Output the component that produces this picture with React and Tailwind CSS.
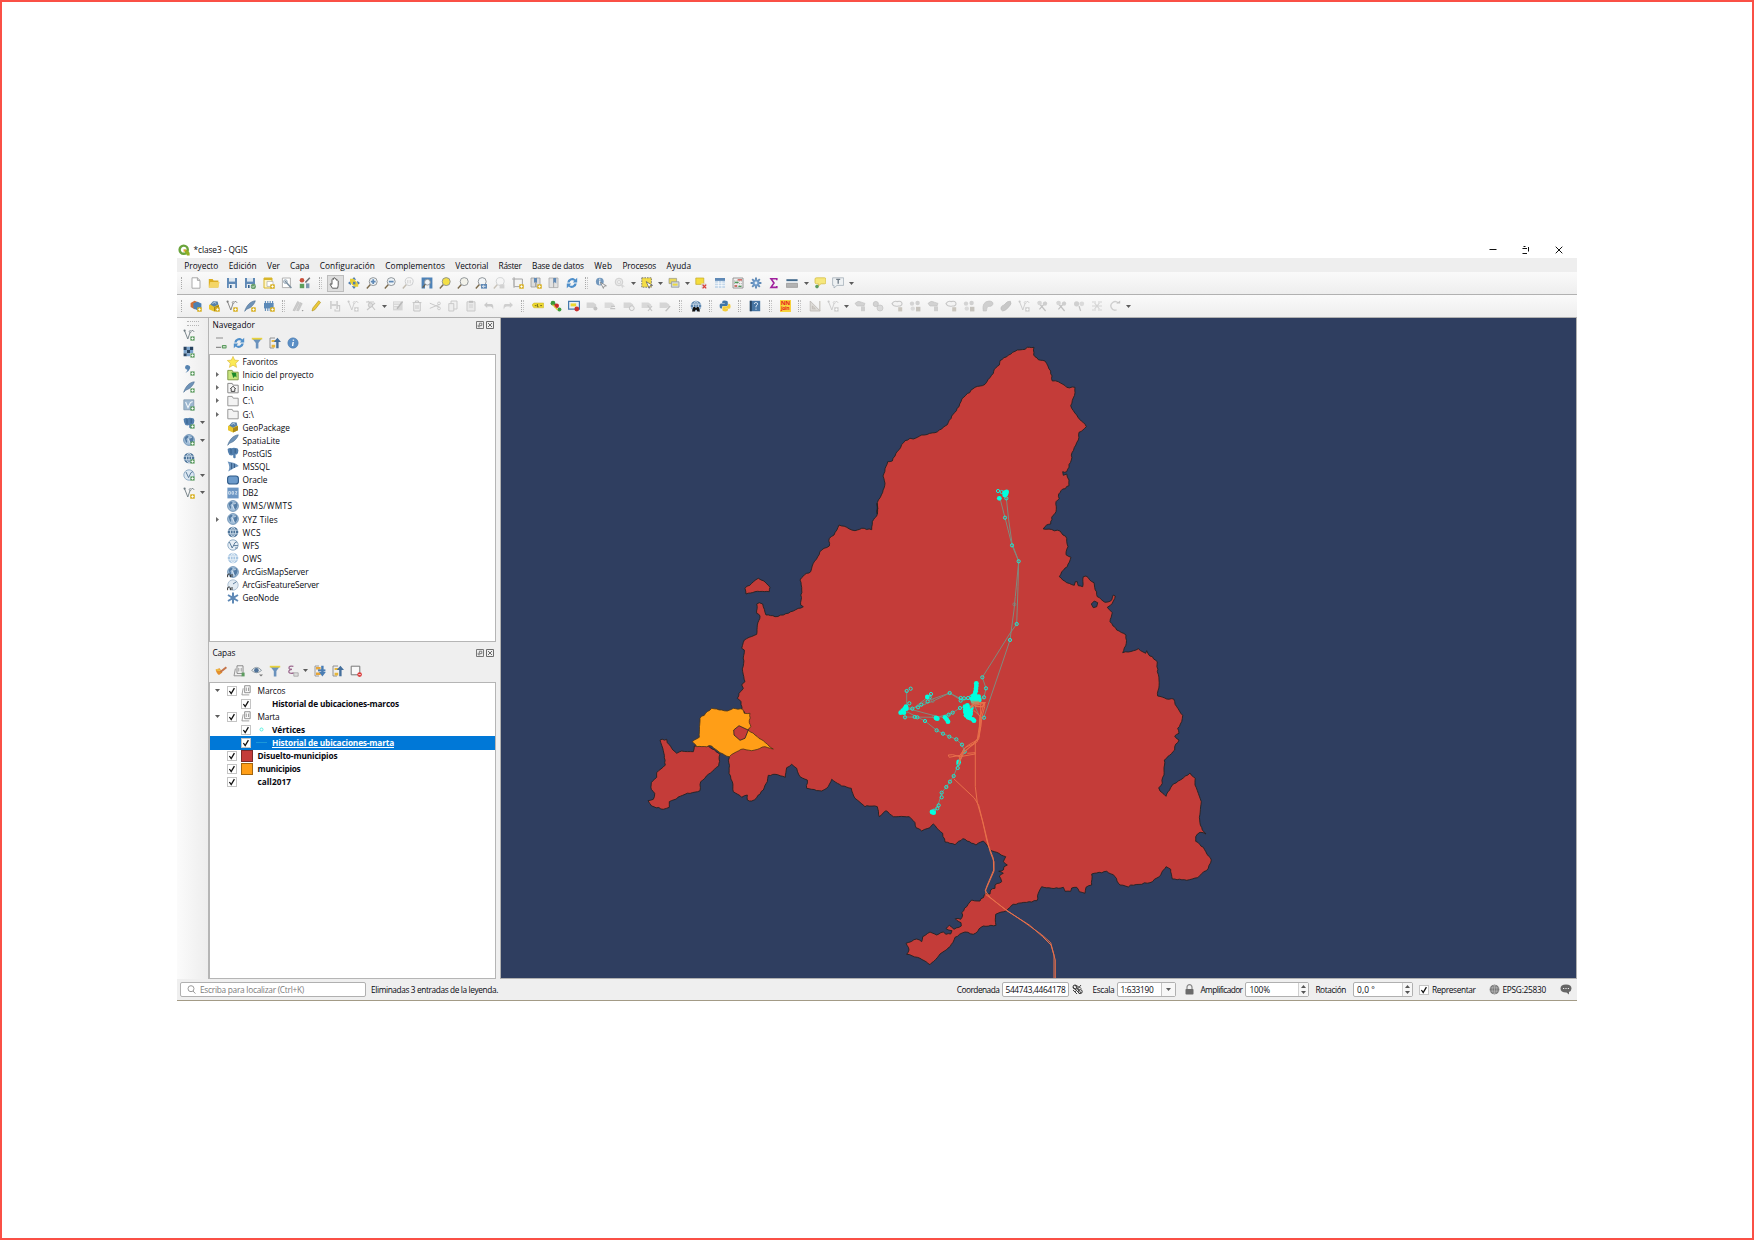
import React, { useLayoutEffect, useRef } from "react";

/* Text run whose tracking is tuned so that it spans a given width. */
function Label({ w, className = "", underline = false, children }) {
  const ref = useRef(null);
  useLayoutEffect(() => {
    const el = ref.current;
    el.style.letterSpacing = "0px";
    const natural = el.getBoundingClientRect().width;
    el.style.letterSpacing = (w - natural) / String(children).length + "px";
  }, [w, children]);
  return (
    <span className={"block shrink-0 whitespace-pre " + className} style={{ width: w }}>
      <span ref={ref} className={underline ? "inline-block underline" : "inline-block"}>{children}</span>
    </span>
  );
}

const B = "#5f89b6";
const D = "#355f8a";
const G = "#c9c9c9";

const plusY = <><rect x="7.2" y="7.2" width="4.6" height="4.6" rx=".6" fill="#d9b32a" /><path d="M8.3 9.5h2.4M9.5 8.3v2.4" stroke="#fff" strokeWidth=".9" /></>;
const plusG = <><rect x="7.4" y="7.4" width="4.2" height="4.2" fill="#5c9c5f" /><path d="M8.3 9.5h2.4M9.5 8.3v2.4" stroke="#fff" strokeWidth=".9" /></>;
const lens = (fill, stroke = "#8a8f93") => <><path d="M4.4 7.6L.8 11.4" stroke="#7b6a4b" strokeWidth="1.4" /><circle cx="7.2" cy="4.6" r="4" fill={fill} stroke={stroke} strokeWidth=".9" /></>;
const floppy = <><path d="M1 1h10v10H1z" fill={B} /><path d="M3 1h6v3.6H3z" fill="#dfe8f0" /><path d="M2.8 7h6.4v4H2.8z" fill="#e9eef3" /><path d="M4 8h1.6v3H4z" fill={D} /></>;
const globe = (fill, line = "#dce8f3") => <><circle cx="6" cy="6" r="5.3" fill={fill} /><path d="M.9 4.2h10.2M.9 7.8h10.2M6 .7v10.6M6 .7C2.6 3.6 2.6 8.4 6 11.3C9.4 8.4 9.4 3.6 6 .7" fill="none" stroke={line} strokeWidth=".8" /></>;
const world = <><circle cx="6" cy="6" r="5.4" fill="#a3bfd9" stroke="#5f86ac" strokeWidth=".8" /><path d="M1.6 3.8L4 1.6l1.6.6-.8 1.8-1.4 1 .8 2.2-1 2zM6.4 5l1.2-2.4L9.4 2l1.2 3-1 3L8 10.200 7 7.600z" fill="#547ca5" /><path d="M5 4.600l2.400 5M7 4l2-1" stroke="#e6eef6" strokeWidth=".8" /></>;
const vee = (c) => <><path d="M1.5 1.6L4.8 10 7 3.6" fill="none" stroke={c} strokeWidth=".9" /><circle cx="1.6" cy="1.6" r="1.1" fill={c} /><circle cx="7.2" cy="2.6" r="1" fill="none" stroke={c} strokeWidth=".7" /><path d="M8.4 1.8Q10.2.4 11.2 3" fill="none" stroke={c} strokeWidth=".8" /></>;
const feather = <path d="M.7 11.3C2.4 6 5.8 1.4 11.3.8 10.8 3.4 7.4 8 2.6 9.2z" fill="#6f93b8" stroke="#4c6f92" strokeWidth=".6" />;
const folder = (f, s) => <path d="M.8 1.4h4.4l1 1.8h5v7.6H.8z" fill={f} stroke={s} strokeWidth=".9" />;
const elephant = <><path d="M.6 2Q2.400.4 4.600 1.200 6.600.2 8.600 1 11 .8 11.400 3.200 11.400 6 9.800 7.600L8.600 7.200v3.600Q7.200 12 6.200 10.600V8L4.400 8.600 2.400 8Q.6 5.400.6 2z" fill="#527fae" /><path d="M4 1.800v5M8.200 2v4.200" stroke="#2f5580" strokeWidth=".8" /></>;
const pack = <><path d="M1 5l5-2.4L11 5v4.2L6 11.6 1 9.2z" fill="#e8c52e" /><path d="M6 7.2L11 5v4.2L6 11.6z" fill="#a88718" /><path d="M2.2 4.4L5 1.2l4.6.4L10.4 4.6 6 6.8z" fill="#5580aa" /><path d="M4.4 3.4l2.4-1 1.4 1.2" stroke="#dce8f2" strokeWidth=".8" fill="none" /></>;
const sync = <><path d="M1.2 5.4A4.900 4.900 0 0 1 9.400 2.400L11.200.8v4.600H6.800l1.500-1.600A3 3 0 0 0 3.600 5.400z" fill="#4f8fca" /><path d="M10.800 6.600A4.900 4.900 0 0 1 2.600 9.600L.8 11.200V6.600h4.400L3.700 8.200a3 3 0 0 0 4.700-1.600z" fill="#4f8fca" /></>;
const funnel = <><path d="M.8 1h10.4L7.4 6v5.4H4.8V6z" fill="#6a92bd" /><path d="M.8.8h10.4v1.8H.8z" fill="#e8d23c" /></>;
const stack = <><path d="M4 .8h6v7.600H4z" fill="#fafafa" stroke="#7d7d7d" strokeWidth=".9" /><path d="M5.800 6.600V2.800M8.200 6.600V2.800" stroke="#7d7d7d" strokeWidth=".8" /><path d="M2.400 3.600L1 10.800h8" fill="none" stroke="#8c8c8c" strokeWidth=".9" /></>;
const tag = (c) => <path d="M.6 2.6h6.8l2.8 1.8v2L7.400 8H.6z" fill={c} />;

const ICONS = {
  page: <path d="M2 .8h5.4L10 3.4v7.8H2zM7.4.8v2.6H10" fill="#fff" stroke="#a2a2a2" strokeWidth=".9" />,
  open: <><path d="M.8 2h3.8l1 1.4h4.8v7H.8z" fill="#dcae22" /><path d="M2.2 5h9.4l-1.4 5.6H.8z" fill="#f4d565" /></>,
  save: floppy,
  saveAs: <>{floppy}<circle cx="9.4" cy="9.4" r="2.6" fill="#6aa06c" /><path d="M8 9.4l1 1 1.8-1.8" stroke="#fff" fill="none" strokeWidth=".7" /></>,
  layout: <><path d="M1 1h8v10H1z" fill="#fff7c9" stroke="#d6b52c" /><path d="M1 1h8v2H1z" fill="#d8b62a" /><path d="M4 4.4h6v5H4z" fill="#fff" stroke="#aaa" strokeWidth=".7" />{plusY}</>,
  layoutMgr: <><path d="M1.4 1h8v9.6h-8z" fill="#fff" stroke="#aaa" strokeWidth=".9" /><path d="M4 4l6.4 7" stroke="#7c8f9f" strokeWidth="1.5" /><circle cx="4.4" cy="4.6" r="1.8" fill="none" stroke="#8399ab" strokeWidth=".9" /></>,
  style: <><circle cx="3" cy="3.2" r="2.3" fill="#c8503c" /><path d="M6.400 5.600l4.400-4.800" stroke="#6b6f72" strokeWidth="1.500" /><path d="M.8 6.800h4.400v4.400H.8z" fill="#5d9e5b" /><path d="M7 6.4h3.400v4.800H7z" fill="#7d98b0" /></>,
  hand: <path d="M3.4 11.2L1 7.2q.8-1 2 .2V2.4q.8-1 1.5 0V1.2q.9-.9 1.6 0v.9q.9-.7 1.5.2v1q1-.5 1.6.5v4.6L8.6 11.2z" fill="#fff" stroke="#3c3c3c" strokeWidth=".8" />,
  pan: <><path d="M6 0l2.200 2.800H3.800zM6 12L3.800 9.200h4.400zM0 6l2.800-2.200v4.400zM12 6L9.200 8.200V3.800z" fill="#4f7db0" /><path d="M2 1.800h3.400l3 2.800 1.800 2.600v2.600H7L3.800 7.400 2 4.800z" fill="#e7cf35" /><path d="M5 4.800h2.400v2.600H5z" fill="#4f7db0" /></>,
  zoomIn: <>{lens("#eef3f6")}<path d="M4.800 4.6h4.800M7.2 2.200v4.800" stroke={B} strokeWidth="1.7" /></>,
  zoomOut: <>{lens("#eef3f6")}<path d="M4.800 4.6h4.800" stroke={B} strokeWidth="1.7" /></>,
  zoomNative: <g opacity=".4">{lens("#f4f4f4")}<path d="M5.8 3v3.4M8.2 3v3.4" stroke="#888" strokeWidth=".8" /></g>,
  zoomFull: <><path d="M.6.6h10.800v10.800H8.400V8H4v3.400H.6z" fill="#4e82b7" /><circle cx="6.4" cy="5.2" r="2.900" fill="#f0f4f8" stroke="#8a9298" strokeWidth=".9" /><path d="M4.4 7.4L1.6 10.6" stroke="#6c6048" strokeWidth="1.2" /></>,
  zoomSel: lens("#f3df45"),
  zoomLayer: lens("#f2f2ea"),
  zoomLast: <>{lens("#f2f5f7")}<path d="M6 7h6v4.6H6z" fill={B} /><path d="M10.6 9.3H7.6M8.8 8L7.4 9.3l1.4 1.3" stroke="#fff" strokeWidth=".8" fill="none" /></>,
  zoomNext: <g opacity=".35">{lens("#f7f7f7")}<path d="M6.6 7.4h4.8v4H6.6z" fill="#999" /></g>,
  newMap: <><path d="M2 2h8.4v7.6H2z" fill="#f3f3f3" stroke="#a6a6a6" strokeWidth="1" /><path d="M2 0v11M0 2h3" stroke="#b1b1b1" />{plusY}</>,
  bookmarkAdd: <><path d="M1 1h4.6v9H1zM6 1h4v9H6z" fill="#dcdcdc" stroke="#999" strokeWidth=".8" /><path d="M4 1h3v5L5.5 4.8 4 6z" fill={B} />{plusY}</>,
  bookmark: <><path d="M1 1h4.6v9.6H1zM5.6 1H10v9.6H5.6z" fill="#e2e2e2" stroke="#aaa" strokeWidth=".8" /><path d="M5.4 1h2.8v5.4L6.8 5 5.4 6.4z" fill={B} /></>,
  sync,
  identify: <><circle cx="4.8" cy="4.6" r="3.9" fill="#7398bd" /><path d="M4.8 3.6v4M4.8 1.8v1" stroke="#fff" strokeWidth="1.2" /><path d="M5.4 5.4l6 3.4-2.4.4-.6 2.2z" fill="#f6f6f6" stroke="#777" strokeWidth=".7" /></>,
  action: <g opacity=".5"><circle cx="5" cy="5" r="3.8" fill="#ddd" stroke="#aaa" /><circle cx="5" cy="5" r="1.5" fill="#fff" stroke="#aaa" strokeWidth=".8" /><path d="M6 6l5 3.6-2 .2-.6 1.8z" fill="#bbb" /></g>,
  select: <><path d="M.8.8h9.6v9.4H.8z" fill="#f4dd45" stroke="#707070" strokeWidth=".9" strokeDasharray="1.6 1" /><path d="M5.2 4.6l6.4 3.8-2.6.3-.8 2.6z" fill="#fff" stroke="#555" strokeWidth=".7" /></>,
  selectForm: <><path d="M1 1.4h7.6v5.2H1z" fill="#e9d85a" stroke="#9a9a8a" strokeWidth=".7" /><path d="M3.4 4.8h7.6v5.4H3.4z" fill="#d5dade" stroke="#8f979d" strokeWidth=".8" /><path d="M4.6 6.6h5v2h-5z" fill="#ecd93f" /></>,
  deselect: <><path d="M.8 1h8v6.400h-8z" fill="#f4dc3d" stroke="#c3a92a" strokeWidth=".7" /><path d="M6.400 6.400h4.800v4.800H6.400z" fill="#ddd" /><path d="M7.6 7.6l3.6 3.8M11.2 7.6L7.6 11.4" stroke="#dc3b34" strokeWidth="1.3" /></>,
  table: <><path d="M1 1h10v10H1z" fill="#c5d8ea" /><path d="M1 1h10v2.8H1z" fill={B} /><path d="M1 6.2h10M1 8.6h10M4.4 4v7M7.8 4v7" stroke="#fff" strokeWidth=".7" /></>,
  calc: <><path d="M1 1h10v10H1z" fill="#f2f2f2" stroke="#8d8d8d" strokeWidth=".9" /><path d="M2 4h8M2 6.6h8M2 9h8" stroke="#777" strokeWidth=".6" strokeDasharray="1.4 1" /><path d="M2.600 5.400h4M6.400 9.400h3" stroke="#4b9955" strokeWidth="1.3" /><path d="M5.600 2.800h4.400M2.600 9h2.400" stroke="#c94b42" strokeWidth="1.3" /></>,
  gear: <><path d="M6 .6v10.8M.6 6h10.8M2.2 2.2l7.6 7.6M9.8 2.2L2.2 9.8" stroke={B} strokeWidth="1.9" /><circle cx="6" cy="6" r="3.5" fill="#6d99c7" /><circle cx="6" cy="6" r="1.4" fill="#e2ecf5" /></>,
  sigma: <path d="M8.800 3.200V1.8H3L6 6 3 10.400h5.800V9" fill="none" stroke="#a0219d" strokeWidth="1.6" />,
  ruler: <><path d="M.4 2.2h11.2v1.8H.4z" fill="#436a8c" /><path d="M.4 4h11.2v1.4H.4z" fill="#d9e2ea" /><path d="M.4 6.4h11.2v4H.4z" fill="#b3b3b3" stroke="#888" strokeWidth=".6" /></>,
  tip: <><path d="M2.6.8h8q1.2 0 1.2 1.2v3.6q0 1.2-1.2 1.2H7L4.4 9V6.8H2.6Q1 6.8 1 5.4V2Q1 .8 2.6.8z" fill="#f6e77c" stroke="#d1b93a" strokeWidth=".7" /><circle cx="3" cy="9.6" r="1.8" fill="#5e9c5e" /></>,
  annot: <><path d="M.6.8h11v7.6H5L2 11V8.4H.6z" fill="#eef1f3" stroke="#a3afb8" strokeWidth=".8" /><path d="M4.2 2.4h4M6.2 2.4v4.4" stroke="#6d7a84" strokeWidth="1.3" /></>,
  dsm: <><path d="M.6 3l4-2.2 4 1.6v5L4.6 9.2.6 7z" fill="#cf7038" /><path d="M3.4 3.2l4-1.4 4 1.8v4.6l-4 2-4-2z" fill="#4b7fb4" />{plusY}</>,
  newGpkg: <>{pack}{plusY}</>,
  newShp: <>{vee("#7a7a7a")}{plusY}</>,
  newSpl: <>{feather}{plusY}</>,
  newTmp: <><path d="M1 3h9.6v5.4H1z" fill="#5c8ab8" /><path d="M2.4 1v10M4.8 1v10M7.2 1v10M9.6 1v3" stroke="#5c8ab8" strokeWidth="1.1" />{plusY}</>,
  pencils: <><path d="M1 10.400L5.600 1.400l1.800 1L3 10.800zM4.600 10.400L8.200 2.600l2 1L6.600 10.800z" fill="#cbcbcb" stroke="#bbb" strokeWidth=".6" /><path d="M9.600 10h2l-1 1.400z" fill="#999" /></>,
  pencil: <path d="M2 11l.8-3L8.6.8l2 1.6L4.8 9.8z" fill="#ecc938" stroke="#ad8e1c" strokeWidth=".6" />,
  gSave: <><path d="M1 1h8v8H1z" fill="#d2d2d2" /><path d="M2.8 1h4.4v3H2.8zM2.8 6h4.4v3H2.8z" fill="#f2f2f2" /><path d="M8 5.6h2.6V11H6V9.2" fill="none" stroke={G} strokeWidth="1.1" /></>,
  gVee: <>{vee(G)}<path d="M7.2 7.2h4.4v4.4H7.2z" fill="#cfcfcf" /><path d="M8.2 9.4h2.4M9.4 8.2v2.4" stroke="#fff" strokeWidth=".8" /></>,
  gNode: <><path d="M1 2h8M3 1l7 9M10 3L2 10" stroke={G} strokeWidth="1.2" /><circle cx="5.4" cy="5" r="2.2" fill="#ddd" stroke="#bfbfbf" strokeWidth=".8" /></>,
  gForm: <><path d="M1 1.4h9.6v9H1z" fill="#d6d6d6" /><path d="M2 3h6M2 5.4h5M2 8h4" stroke="#f6f6f6" strokeWidth=".9" /><path d="M10.6 1.6L5 8.8" stroke="#b8b8b8" strokeWidth="1.4" /></>,
  gTrash: <path d="M1.6 2.6h8.8M4.4 2.4V1h3v1.4M2.8 3v8h6.4V3M5 4.8v4.4M7 4.8v4.4" fill="none" stroke="#c3c3c3" strokeWidth="1" />,
  gCut: <><path d="M.8 3.2l9.6 4M.8 8.4l9.6-4" stroke={G} strokeWidth="1" /><circle cx="10" cy="3.4" r="1.4" fill="none" stroke={G} strokeWidth=".9" /><circle cx="10" cy="8.4" r="1.4" fill="none" stroke={G} strokeWidth=".9" /></>,
  gCopy: <><path d="M4 1h6v8H4z" fill="#f1f1f1" stroke="#c6c6c6" strokeWidth=".9" /><path d="M1.8 3.6h5v7.4h-5z" fill="#ededed" stroke="#c6c6c6" strokeWidth=".9" /></>,
  gPaste: <><path d="M2 1.8h8V11H2z" fill="#e9e9e9" stroke={G} /><path d="M4 .8h4v2H4z" fill="#bdbdbd" /><path d="M4 5h4M4 7h4" stroke={G} strokeWidth=".8" /></>,
  gUndo: <path d="M1 5l3.2-3v2h5q1.8 1.6 1 5.4Q9.4 6.6 7.6 6.4H4.2V8z" fill="#cacaca" />,
  gRedo: <path d="M11 5L7.8 2v2h-5Q1 5.6 1.8 9.4 2.6 6.6 4.4 6.4h3.4V8z" fill="#cfcfcf" />,
  label: <><path d="M0 5l1.800-2H11.600v4.800H1.800z" fill="#ecd72f" stroke="#c8b327" strokeWidth=".5" /><path d="M2.8 5.6h1.6M5.4 4v2.8h1.2M8.2 5.6H10" stroke="#6c6320" strokeWidth=".9" fill="none" /></>,
  diagram: <><circle cx="3" cy="3.2" r="2.4" fill="#3d9a3b" /><circle cx="6.6" cy="5.8" r="2.4" fill="#c92a2a" /><circle cx="9.4" cy="9.6" r="2" fill="#3d9a3b" /><path d="M2.6 4.6L7.6 9.8" stroke="#dcc52b" strokeWidth="1.2" /></>,
  labelHi: <><path d="M.6 1.4h10.8v7.8H.6z" fill="#e9f0f8" stroke="#4679ad" strokeWidth="1.2" /><path d="M2.6 3.4h5.6v3H2.6z" fill="#ecd72f" /><circle cx="8.8" cy="9" r="2.4" fill="#c92f2f" /></>,
  gTagA: <>{tag("#d4d4d4")}<circle cx="9.4" cy="8.4" r="2" fill="#c3c3c3" /></>,
  gTagB: <>{tag("#dadada")}<path d="M7 6.4h4M6.2 8.6h5" stroke="#c4c4c4" strokeWidth="1.2" /></>,
  gTagC: <>{tag("#d6d6d6")}<circle cx="8.8" cy="8.2" r="2.4" fill="#eee" stroke="#c4c4c4" /></>,
  gTagD: <>{tag("#d8d8d8")}<path d="M6.6 5.4L11 11M11 6l-4 5" stroke="#c5c5c5" strokeWidth="1.2" /></>,
  gTagE: <>{tag("#d5d5d5")}<path d="M6 11l4.6-5.4 1 1L7.4 11.6z" fill="#c3c3c3" /></>,
  metasearch: <>{globe("#5c86af", "#cfdeec")}<path d="M2 11.600L3.400 7h2v1h1.200V7h2L10 11.600H7.400L6.600 9.800h-1l-.8 1.800z" fill="#111" /></>,
  python: <><path d="M5.8.6q3 0 3 1.6v2.6q0 1.2-1.4 1.2H4.2Q3 6 3 7.4v1H1.8Q.6 8.4.6 5.8t1.6-2.4h3.6V3H3.2V2Q3.2.6 5.8.6z" fill="#3f76a8" /><path d="M6.4 11.4q-3 0-3-1.6V7.4q0-1.2 1.4-1.2h3q1.4 0 1.4-1.4v-1h1q1.4 0 1.4 2.6T9.800 8.800H6.400V9h2.600v1q0 1.400-2.600 1.400z" fill="#f3cd3a" /></>,
  help: <><path d="M.8.8h10.4v10.4H.8z" fill="#4675a3" /><path d="M.8.8h2v10.4h-2z" fill="#27435f" /><path d="M5.200 4q.2-1.600 1.900-1.500Q8.800 2.700 8.600 4.200 8.400 5.200 7 6v1.400M7 8.600v1.200" fill="none" stroke="#d6e4f2" strokeWidth="1" /></>,
  gAngle: <><path d="M1.200 1v10h10zM3.400 6v2.800h3z" fill="#dcdad6" stroke="#bcb8b2" strokeWidth=".8" /><path d="M10.800 1v10" stroke="#c6c2bc" strokeWidth="1.200" /></>,
  gCirc: <><path d="M1 3.400Q4 0 7.400 2.200L11 3.400 10 6H3z" fill="#d2d2d2" stroke="#c0c0c0" strokeWidth=".6" /><path d="M7 6.400h4v4.800H7z" fill="#cfcfcf" /></>,
  gCirc2: <><circle cx="3.800" cy="4" r="2.600" fill="#d3d3d3" stroke="#bebebe" strokeWidth=".7" /><circle cx="8" cy="8" r="3" fill="#dadada" stroke="#c3c3c3" strokeWidth=".7" /></>,
  gRing: <><path d="M1 3.600Q3 .4 6 1.600 10.600.4 11 3.400 11 6 7.600 6 2.400 7 1 3.600z" fill="#f3f3f3" stroke="#c6c6c6" strokeWidth="1.100" /><path d="M7.200 7.200h4v4.200h-4z" fill="#cac6be" /></>,
  gBlobs: <><circle cx="3" cy="3.600" r="2.200" fill="#d3d3d3" /><circle cx="8.600" cy="3" r="2.200" fill="#d0d0d0" /><circle cx="3.800" cy="8.600" r="2.200" fill="#dadada" /><path d="M7 6.800h4.400v4.600H7z" fill="#c6c3bd" /></>,
  gCurve: <path d="M1.200 11Q-.4 1.600 7 1q4.400.2 4 3.200Q10 7 6.400 6.400 4.600 7 4.400 11z" fill="#cfcfcf" stroke="#c0c0c0" strokeWidth=".6" />,
  gLeaf: <path d="M1 9.600Q.4 6 4 5 7 .6 10.400 1.200 12 4 9.400 6.200 6 11 2.600 11z" fill="#c8c8c8" stroke="#b9b9b9" strokeWidth=".6" />,
  gSciss: <><path d="M2 2l7.600 9M10 2L3.400 9.400" stroke="#c2c2c2" strokeWidth="1.200" /><circle cx="3.600" cy="3" r="2.300" fill="#d6d6d6" /><circle cx="9" cy="3.600" r="2.200" fill="#cecece" /></>,
  gMerge: <><circle cx="3.600" cy="3.800" r="2.600" fill="#d0d0d0" /><circle cx="8.800" cy="3.800" r="2.400" fill="#dadada" /><path d="M6 6l1.600 5" stroke="#c4c4c4" strokeWidth="1.200" /></>,
  gGrid: <path d="M1 2h4M7 2h4M1 6h4M7 6h4M1 10h4M7 10h4M3.600 3L8.400 9M8.400 3L3.600 9" stroke="#d3d3d3" strokeWidth="1.200" />,
  gRot: <><path d="M7.600 9.800A4.200 4.200 0 1 1 9.200 3" fill="none" stroke="#cfcfcf" strokeWidth="1.400" /><path d="M7.200 3.600h4V.400z" fill="#c6c6c6" /></>,
  lVec: <>{vee("#6d7a80")}{plusG}</>,
  lRas: <><path d="M.6.8h3.200V4H.6zM7 .8h3.200V4H7zM3.800 4H7v3.200H3.800zM.6 7.200h3.200v3H.6z" fill="#27425f" /><path d="M3.800.8H7V4H3.800zM.6 4h3.200v3.200H.6zM7 4h3.200v3.200H7zM3.800 7.200H7v3H3.800z" fill="#7ba3cb" />{plusG}</>,
  lTxt: <><path d="M2 3.200a2.600 2.600 0 1 1 5 1.400Q6 7.800 2.400 9 4.600 6.800 4.400 5.800 2 5.600 2 3.200z" fill="#5683b0" />{plusG}</>,
  lSpl: <>{feather}{plusG}</>,
  lVir: <><path d="M.8.8h10v10h-10z" fill="#9db7cf" stroke="#7893ab" strokeWidth=".7" /><path d="M2.600 3L5 8.600 7.400 3.600 9.600 2.400" stroke="#f2f6f9" fill="none" strokeWidth="1.100" />{plusG}</>,
  lPg: <>{elephant}{plusG}</>,
  lWms: <>{world}{plusG}</>,
  lWcs: <>{globe("#4c7399")}{plusG}</>,
  lWfs: <><circle cx="6" cy="6" r="5.200" fill="#dbe7f2" stroke="#7f9fbd" strokeWidth=".8" /><path d="M3 3l2.600 5.600L8 3.600l2-1" stroke="#5c7d9c" fill="none" />{plusG}</>,
  lNew: <>{vee("#6d7a80")}{plusY}</>,
  addSel: <><path d="M1 1h7M1 10.400h5" stroke="#8d8d8d" strokeWidth="1.100" /><rect x="6.800" y="8" width="4.800" height="3.600" rx="1" fill="#5c9c5f" /><path d="M8 9.800h2.600" stroke="#fff" strokeWidth=".9" /></>,
  funnel,
  collapse: <><path d="M1 1h5M1 1v10h4" stroke="#888" fill="none" strokeWidth=".9" /><path d="M2.600 3h4v2h-4zM2.600 7.800h3.600v2.600H2.600z" fill="#e6b63a" /><path d="M7.200 11.200V5H4.800L8.400.8 12 5H9.600v6.200z" fill="#456f9c" /></>,
  expand: <><path d="M1 1h4M1 1v10h4" stroke="#888" fill="none" strokeWidth=".8" /><path d="M2 2h4.600v2.400H2zM2 7.600h4.600V10H2z" fill="#e6a63a" /><path d="M7.200.8V7H5l3.400 4.400L11.800 7H9.600V.8z" fill="#4a7db3" /><path d="M4 5.400h7.400" stroke="#4a7db3" strokeWidth="2" /></>,
  info: <><circle cx="6" cy="6" r="5.200" fill="#5b8fc6" stroke="#4675a8" strokeWidth=".5" /><path d="M6.200 5L5.600 9M6.500 2.600l-.1 1.200" stroke="#fff" strokeWidth="1.400" /></>,
  brush: <><path d="M.6 4.600l4-1.400 2.800 4.200L4 10Q1.600 9 .6 4.600z" fill="#e48f2c" /><path d="M5.400 7L11.400 2.200" stroke="#c4744a" strokeWidth="2" /><path d="M1.400 4.800l4 .6" stroke="#f0c94a" strokeWidth="1.400" /></>,
  group: <>{stack}<path d="M8.600 7.600h3v3.800h-3z" fill="#5c9c5f" /></>,
  eye: <><path d="M.6 5.400Q5.400-.6 10.600 5.400 5.400 10 .6 5.400z" fill="#e6ebef" stroke="#8a959d" strokeWidth=".9" /><circle cx="5.400" cy="5.200" r="2.300" fill="#4f7298" /><path d="M8 9.400h4l-2 2z" fill="#777" /></>,
  expr: <><path d="M6.400 1.400Q1.600.4 2 3.200q.6 1.400 3 1.200Q1.600 4.600 1.800 7q.6 2 5 1" fill="none" stroke="#9c6a8f" strokeWidth="1.300" /><path d="M6.800 7.800h4.400v3.400H6.800z" fill="#ddd" stroke="#999" strokeWidth=".7" /></>,
  remove: <><path d="M1.200 1.200h8.600v8.600H1.200z" fill="#f8f8f8" stroke="#777" strokeWidth="1" /><circle cx="9.600" cy="9.600" r="2.300" fill="#dc3b3b" /><path d="M8.400 9.600h2.400" stroke="#fff" strokeWidth=".8" /></>,
  star: <path d="M6 .4l1.700 3.700 4 .4-3 2.700.9 4.200L6 9.200l-3.600 2.200.9-4.200-3-2.700 4-.4z" fill="#fbea55" stroke="#d6b53a" strokeWidth=".6" />,
  projHome: <>{folder("#c9e57f", "#79933d")}<path d="M4.400 3.600l4.800.4.400 4.600-1.600-1.400L6.200 9 5.400 6z" fill="#1d8a2b" /></>,
  home: <>{folder("#f6f6f6", "#808080")}<path d="M3.200 7L6 4.200 8.800 7M4.200 6.600v2.800h3.600V6.600" fill="none" stroke="#333" strokeWidth=".9" /></>,
  folder: folder("#f3f3f3", "#909090"),
  pack,
  feather,
  elephant,
  mssql: <><path d="M.6.6Q8 1.600 11.800 5 6 7 1.200 10.600 3.600 6 .6.6z" fill="#6b93bd" /><path d="M4.600 2v6.200M7.400 2.800v4.200" stroke="#2f5580" strokeWidth=".9" /></>,
  oracle: <rect x=".6" y="2" width="10.800" height="8" rx="2.600" fill="#6d9bcb" stroke="#2f5a88" strokeWidth="1.100" />,
  db2: <><path d="M.4.6h11.200v10.800H.4z" fill="#6c96c4" /><path d="M1.600 4.600h1.800v2.600H1.600zM5 4.600h1.600v2.600H5zM8.200 4.600H10L8.400 7.200H10.200" fill="none" stroke="#dbe7f3" strokeWidth=".8" /></>,
  world,
  wcs: globe("#4c7399"),
  wfs: <><circle cx="6" cy="6" r="5.200" fill="#e8eff6" stroke="#7f9fbd" strokeWidth=".8" /><path d="M2.400 3l2.800 6L8 3.600 10 2.800M7 6.600h4M8 9h2.600" stroke="#5c7d9c" fill="none" /></>,
  ows: globe("#a8c6e2", "#f2f7fb"),
  arcMap: <>{world}<path d="M.6 11.200V8.600Q2.200 7 3.400 8.800v2.400M5 11V8" stroke="#222" fill="none" strokeWidth=".9" /></>,
  arcFeat: <><circle cx="6" cy="6" r="5.200" fill="#e2ebf3" stroke="#9fb6cb" strokeWidth=".8" /><path d="M6 5l3.600-2.400" stroke="#5c7d9c" /><path d="M.6 11.200V8.600Q2.200 7 3.400 8.800v2.400M5 11V8" stroke="#222" fill="none" strokeWidth=".9" /></>,
  geonode: <><path d="M6 .4v11.200M1 3l10 6M1 9l10-6" stroke="#5f89b6" strokeWidth="2" /><circle cx="6" cy="6" r="2.400" fill="#5f89b6" /></>,
  stack,
};

const Icon = ({ n, s = 12 }) => (
  <svg width={s} height={s} viewBox="0 0 12 12" className="block shrink-0">{ICONS[n]}</svg>
);

const Caret = () => <svg width="5" height="3" viewBox="0 0 5 3" className="block"><path d="M0 0h5L2.500 3z" fill="#5c5c5c" /></svg>;

function Handle({ w }) {
  return (
    <div className="flex shrink-0 items-center justify-center gap-px" style={{ width: w }}>
      <div className="h-3 border-l border-dotted border-[#a9a9a9]" />
      {w > 10 && <div className="h-3 border-l border-dotted border-[#c4c4c4]" />}
    </div>
  );
}

/* A number is a grip of that width, "v" a drop-down caret, "NN" the join plug-in. */
function Bar({ items }) {
  return (
    <div className="flex h-[23px] shrink-0 items-center border-b border-[#b1b1b1] bg-gradient-to-b from-[#fafafa] to-[#eeeeee]">
      {items.map((it, i) => {
        if (typeof it === "number") return <Handle key={i} w={it} />;
        if (it === "v") return <div key={i} className="flex w-[9px] shrink-0 justify-center pt-px"><Caret /></div>;
        if (it === "NN")
          return (
            <div key={i} className="flex w-[18.23px] shrink-0 justify-center">
              <div className="h-[12px] w-[11px] bg-[#f8d23c] text-center text-[6px] font-bold leading-[6px] tracking-tighter text-[#e8241c]">
                <div>NN</div><div className="text-[5px] leading-[5px]">join</div>
              </div>
            </div>
          );
        if (it === "hand")
          return (
            <div key={i} className="flex w-[18.23px] shrink-0 justify-center">
              <div className="flex h-[17px] w-[17px] items-center justify-center border border-[#bdbdbd] bg-[#dedede]"><Icon n="hand" /></div>
            </div>
          );
        return <div key={i} className="flex w-[18.23px] shrink-0 justify-center"><Icon n={it} /></div>;
      })}
    </div>
  );
}

const BAR1 = [9.6, "page", "open", "save", "saveAs", "layout", "layoutMgr", "style", 12.2, "hand", "pan", "zoomIn", "zoomOut", "zoomNative", "zoomFull", "zoomSel", "zoomLayer", "zoomLast", "zoomNext", "newMap", "bookmarkAdd", "bookmark", "sync", 11, "identify", "action", "v", "select", "v", "selectForm", "v", "deselect", "table", "calc", "gear", "sigma", "ruler", "v", "tip", "annot", "v"];
const BAR2 = [9.6, "dsm", "newGpkg", "newShp", "newSpl", "newTmp", 11.4, "pencils", "pencil", "gSave", "gVee", "gNode", "v", "gForm", "gTrash", "gCut", "gCopy", "gPaste", "gUndo", "gRedo", 11.8, "label", "diagram", "labelHi", "gTagA", "gTagB", "gTagC", "gTagD", "gTagE", 12.2, "metasearch", 11, "python", 12, "help", 12, "NN", 11.3, "gAngle", "gVee", "v", "gCirc", "gCirc2", "gRing", "gBlobs", "gCirc", "gRing", "gBlobs", "gCurve", "gLeaf", "gVee", "gSciss", "gSciss", "gMerge", "gGrid", "gRot", "v"];

const MENU = [["Proyecto", 34], ["Edición", 28], ["Ver", 12.600], ["Capa", 19.200], ["Configuración", 55.300], ["Complementos", 59.600], ["Vectorial", 32.900], ["Ráster", 23], ["Base de datos", 51.900], ["Web", 17.900], ["Procesos", 33.600], ["Ayuda", 24.700]];

const SIDE = [["lVec"], ["lRas"], ["lTxt"], ["lSpl"], ["lVir"], ["lPg", 1], ["lWms", 1], ["lWcs"], ["lWfs", 1], ["lNew", 1]];

const TREE = [
  ["star", "Favoritos", 35.300], ["projHome", "Inicio del proyecto", 71.300, 1], ["home", "Inicio", 21.300, 1], ["folder", "C:\\", 11.500, 1], ["folder", "G:\\", 11.500, 1],
  ["pack", "GeoPackage", 47.500], ["feather", "SpatiaLite", 37.500], ["elephant", "PostGIS", 29.300], ["mssql", "MSSQL", 27.300], ["oracle", "Oracle", 25], ["db2", "DB2", 15.500],
  ["world", "WMS/WMTS", 50], ["world", "XYZ Tiles", 35.500, 1], ["wcs", "WCS", 18.300], ["wfs", "WFS", 16.700], ["ows", "OWS", 19.300], ["arcMap", "ArcGisMapServer", 66], ["arcFeat", "ArcGisFeatureServer", 76.500], ["geonode", "GeoNode", 36.500],
];

const Check = () => (
  <div className="flex h-[10px] w-[10px] shrink-0 items-center justify-center border border-[#c4c4c4] bg-white">
    <svg width="8" height="8" viewBox="0 0 8 8"><path d="M1.400 4L3.200 6.600 6.400 1.200" fill="none" stroke="#111" strokeWidth="1.300" /></svg>
  </div>
);

function PanelHead({ title, w }) {
  return (
    <div className="flex h-[13px] shrink-0 items-center pl-[3.500px] pr-[2px]">
      <Label w={w}>{title}</Label>
      <div className="ml-auto flex gap-[2px]">
        <svg width="8" height="8" viewBox="0 0 8 8"><path d="M.5.5h7v7h-7z" fill="none" stroke="#777" /><path d="M3.400 2.200h2.400v2.400H3.400zM2.200 3.800v2h2" fill="none" stroke="#666" strokeWidth=".8" /></svg>
        <svg width="8" height="8" viewBox="0 0 8 8"><path d="M.5.5h7v7h-7zM2 2l4 4M6 2L2 6" fill="none" stroke="#6c6c6c" /></svg>
      </div>
    </div>
  );
}

const tile = (ox, oy, s) => s.trim().split(/\s+/).map((p) => { const [x, y] = p.split(",").map(Number); return [ox + x / 3, oy + y / 3]; });
const rough = (pts) => {
  const out = [];
  const n = pts.length;
  let seed = 7;
  const rnd = () => { seed = (seed * 16807) % 2147483647; return seed / 2147483647 - 0.5; };
  for (let i = 0; i < n; i++) {
    const a = pts[i], b = pts[(i + 1) % n];
    const len = Math.hypot(b[0] - a[0], b[1] - a[1]) || 1;
    const k = Math.max(1, Math.round(len / 2.600));
    out.push(a);
    for (let j = 1; j < k; j++) {
      const t = j / k, d = rnd() * 1.200;
      out.push([a[0] + (b[0] - a[0]) * t - ((b[1] - a[1]) / len) * d, a[1] + (b[1] - a[1]) * t + ((b[0] - a[0]) / len) * d]);
    }
  }
  return out;
};
const toPath = (pts, close = true) => "M" + pts.map((p) => p[0].toFixed(1) + " " + p[1].toFixed(1)).join("L") + (close ? "Z" : "");

const MAIN = [
  ...tile(860, 320, "37,629 37,605 52,582 52,548 68,517 75,490 69,468 83,425 97,423 108,400 135,362 150,355 160,357 185,345 225,338 245,327 262,314 275,288 297,260 306,236 345,202 375,193 400,160 403,148 418,135 420,122 458,97 472,90 495,88 502,82 522,82 521,105 535,119 555,123 572,153 577,183 595,185 620,202 645,202 645,218 632,257 650,285 679,320 657,337 655,360 636,398 634,420 620,455 608,455 610,466 620,462 627,480 627,497 603,512 596,522 598,536 588,545 588,575 575,592 572,612 560,615 550,627 600,633 620,655 624,680 618,704 633,712 622,740 605,755 598,770 620,788 643,796 646,785 652,785 655,797 668,800 670,770 678,768 702,788 712,830 735,847 752,843 760,825 766,828 757,850 742,862 757,878 750,905 770,930 798,945 799,970 788,998"),
  ...tile(860, 640, "805,36 835,26 857,40 860,32 865,42 892,65 892,95 897,120 893,168 920,177 941,177 950,200 968,226 965,245 953,265 957,280 944,288 957,300 944,320 944,330 913,360 912,405 908,412 907,430 896,443 900,453 918,469 940,432 955,423 990,399 1006,415 1005,435 1015,460 1024,485 1019,540 1027,570 1038,582 1020,577 1007,590 1007,604 1030,622 1054,660 1045,685 1013,713 980,721 937,717 932,688 918,680 898,710 870,728 812,735 805,741 780,735 760,704 740,694 695,702 695,735 678,742 675,760 658,755 650,742 635,744 632,754 615,754 610,742 575,745 545,740 535,760 531,782 460,793 440,812 407,823 408,856 370,858 340,883 315,876 285,892 270,920 240,942 210,974 180,955 140,943 147,930 138,910 170,897 185,905 188,890 210,876 230,885 250,876 258,883 272,882 276,872 258,866 268,856 282,868 304,858 303,848 286,836 302,838 308,825 305,818 335,780 360,783 378,760 390,762 392,750 405,745 405,735 425,725 418,708 430,700 416,694 430,690 432,680 442,675 430,665 437,650 390,630 370,603 348,615 308,596 285,614 255,606 248,580 220,552 210,563 185,573 168,563 165,548 148,530 100,530 78,512 58,530 52,500 20,497"),
  ...tile(640, 500, "675,920 645,895 634,865 605,858 575,838 560,865 545,873 500,865 502,840 480,830 470,805 455,793 440,803 436,832 405,823 385,826 382,845 370,870 350,893 335,903 322,900 322,885 305,892 280,875 277,845 267,820 267,765 325,690 313,635 305,630 303,605 292,595 297,580 310,565 305,555 315,545 308,515 313,450 305,445 313,420 350,403 352,375 360,348 350,340 350,312 358,308 368,312 378,345 405,350 430,345 460,333 490,320 482,315 485,270 480,240 500,220 512,215 520,190 545,150 568,138 568,115 582,105 597,75 620,82 645,92 665,85 695,89 697,65 712,42 711,10"),
];
MAIN.splice(0, 2);
const EXTRA = [
  tile(640, 500, "60,720 80,718 82,728 95,745 110,760 125,753 160,755 163,738 205,738 240,763 236,798 182,845 180,872 135,883 88,905 88,922 70,928 35,918 24,902 40,898 44,880 34,868 34,848 50,832 50,818 76,795 70,752"),
  tile(640, 500, "315,265 335,250 355,235 372,243 390,262 388,275 345,275 318,282"),
];
const ORANGE = tile(640, 500, "180,655 215,625 245,630 262,633 280,625 308,628 313,640 330,640 328,668 333,680 325,690 345,705 370,722 400,747 375,740 335,752 310,747 290,755 268,770 240,758 215,738 170,740 157,725 178,712");
const ORANGE_HOLE = tile(640, 500, "297,677 318,687 325,690 315,715 300,721 282,705 281,690");
const LAKE = tile(860, 320, "694,852 703,843 713,848 710,860 700,863");

const TRACKS = [
  tile(860, 320, "420,535 435,593 456,676 476,724 474,800 470,912 450,940 400,1020 367,1072"),
  tile(860, 320, "438,525 446,600 456,670 476,724 466,830 462,870 450,960 430,1020 372,1190"),
  tile(860, 640, "367,112 378,145 372,172 345,180 302,176 269,159 220,183 172,201 130,212"),
  tile(860, 640, "140,153 140,200 157,207 203,172 213,162"),
  tile(860, 640, "140,205 235,230 255,232 300,204 320,200"),
  tile(860, 640, "130,231 232,232 278,218"),
  tile(860, 640, "140,215 195,243 230,271 249,281 289,298 306,314 314,335 295,372 281,408 259,441 245,458 232,503 218,517"),
  tile(860, 640, "203,182 269,159 302,180 345,176"),
  tile(860, 640, "350,150 345,200 360,232 372,233"),
];
const NODES = [
  ...tile(860, 320, "414,513 425,516 435,593 456,676 476,724 470,912 450,960 439,535"),
  ...tile(860, 640, "367,112 378,145 372,172 372,233 269,159 302,174 302,182 312,175 324,174 334,170 300,204 278,218 266,224 140,153 152,146 213,162 203,184 209,172 184,194 174,202 157,206 148,190 135,232 164,231 172,232 195,243 230,271 249,281 268,290 289,298 306,314 314,335 295,372 293,384 281,408 270,425 259,441 245,458 245,472 236,496 232,505 222,512"),
];
const BLOBS = [
  ...tile(860, 320, "434,518 438,522 434,525 440,516 418,535"),
  ...tile(860, 640, "122,218 128,212 134,206 132,218 139,206 138,200 202,171 232,236 228,234 255,232 260,238 264,245 216,516 221,518 349,130 349,138 348,146 347,154 345,162 340,168 348,170 356,170 336,176 345,178 354,178 340,184 351,184 358,180 315,200 322,196 316,208 325,206 334,204 316,216 324,216 332,214 318,226 326,226 332,222 330,234 338,238 342,242 324,232 296,366"),
];
const FAINT = tile(860, 320, "463,853").concat(tile(860, 640, "218,183 193,190 222,230"));
const ROUTES = [
  tile(860, 640, "330,205 345,196 374,190 374,200 366,230 362,262 356,298 325,315 310,330 300,360"),
  tile(860, 640, "340,210 360,228 358,260 352,298 346,306 346,440 352,488 368,545 380,600 392,640 402,665 402,693 377,750 378,764 436,808 495,848 545,884 572,908 582,945 582,1014"),
  tile(860, 640, "372,190 360,235 357,290 340,312 316,322 300,346 268,352 265,345 278,344 300,350 345,342 345,338 322,340"),
  tile(860, 640, "281,416 343,474 356,496 372,560 386,618 400,655 401,690 382,735 376,752 390,772 440,812 508,855 548,890 573,915 586,960 586,1014"),
  tile(860, 640, "362,190 362,260 352,305 318,330 296,350"),
  tile(860, 640, "300,346 296,372 310,340 322,328 352,300"),
];

function MapCanvas() {
  return (
    <svg className="block h-full w-full" viewBox="501 318 1075 660" preserveAspectRatio="none">
      <rect x="501" y="318" width="1075" height="660" fill="#2f3e60" />
      <path d={toPath(rough(MAIN)) + toPath(LAKE)} fillRule="evenodd" fill="#c43c39" stroke="#232323" strokeWidth=".9" />
      {EXTRA.map((p, i) => <path key={i} d={toPath(rough(p))} fill="#c43c39" stroke="#232323" strokeWidth=".9" />)}
      <path d={toPath(rough(ORANGE))} fill="#ff9e17" stroke="#4a3415" strokeWidth=".8" />
      <path d={toPath(ORANGE_HOLE)} fill="#c43c39" stroke="#232323" strokeWidth=".8" />
      {TRACKS.map((p, i) => <path key={i} d={toPath(p, false)} fill="none" stroke="#808a7e" strokeWidth="1" />)}
      {FAINT.map((p, i) => <circle key={i} cx={p[0]} cy={p[1]} r="1.500" fill="none" stroke="#6d9488" strokeWidth=".7" />)}
      {NODES.map((p, i) => <circle key={i} cx={p[0]} cy={p[1]} r="1.600" fill="none" stroke="#14f0d8" strokeWidth="1" />)}
      {BLOBS.map((p, i) => <circle key={i} cx={p[0]} cy={p[1]} r="2.400" fill="#00ffe0" />)}
      {ROUTES.map((p, i) => <path key={i} d={toPath(p, false)} fill="none" stroke="#e8704a" strokeWidth="1" />)}
      <path d={toPath(tile(860, 640, "332,202 345,188 374,188 368,200 345,199"), false)} fill="none" stroke="#e8704a" strokeWidth="1.600" />
      <path d={toPath(tile(860, 640, "334,182 358,182 358,194 334,194"))} fill="#c98a5c" opacity=".7" />
    </svg>
  );
}

function LayerRow({ level = 0, arrow, sel, icon, w, bold, children }) {
  return (
    <div className={"flex h-[13.12px] shrink-0 items-center " + (sel ? "bg-[#0078d7] text-white" : "")}>
      <div className="flex w-[17px] shrink-0 justify-center pr-[3px]">{arrow && <Caret />}</div>
      {level === 1 && <div className="w-[14px] shrink-0" />}
      <Check />
      <div className={"flex shrink-0 justify-center " + (level === 1 ? "w-[21px]" : "w-[20.500px] pr-px")}>{icon}</div>
      <Label w={w} className={bold ? "font-bold" : ""} underline={sel}>{children}</Label>
    </div>
  );
}

const Field = ({ className = "", children }) => (
  <div className={"flex h-[15px] shrink-0 items-center rounded-[2px] border border-[#b0b0b0] bg-white " + className}>{children}</div>
);
const Spin = () => (
  <div className="ml-auto flex h-full w-[10px] flex-col items-center justify-center gap-[3px] border-l border-[#d0d0d0] bg-[#f7f7f7]">
    <svg width="5" height="3" viewBox="0 0 5 3"><path d="M0 3h5L2.500 0z" fill="#555" /></svg>
    <svg width="5" height="3" viewBox="0 0 5 3"><path d="M0 0h5L2.500 3z" fill="#555" /></svg>
  </div>
);

export default function App() {
  return (
    <div className="h-[1240px] w-[1754px] overflow-hidden border-2 border-[#fa5046] bg-white pl-[175px] pt-[240px] font-['Open_Sans','Noto_Sans',sans-serif] text-[8.300px] leading-[12px] text-[#08080f]">
      <div className="flex h-[759px] w-[1400px] flex-col bg-[#efefef]">
        <div className="flex h-[16px] shrink-0 items-center bg-white">
          <svg className="ml-px shrink-0" width="12" height="12" viewBox="0 0 12 12"><circle cx="5.700" cy="5.700" r="4.100" fill="none" stroke="#6aa43c" strokeWidth="2.400" /><path d="M5.600 5.600h2.800l3.200 3.200v2.800H9z" fill="#93b023" /><path d="M5.400 5.400l3 .4-2.600 2.400z" fill="#ee9a33" /></svg>
          <Label w={54} className="ml-[3.500px]">*clase3 - QGIS</Label>
          <div className="ml-auto flex items-center pr-[14px]">
            <svg width="8" height="8" viewBox="0 0 8 8"><path d="M.5 3.500h7" stroke="#111" /></svg>
            <svg className="ml-[25px]" width="8" height="8" viewBox="0 0 8 8"><path d="M.5 2.500H5M.5 7.500H5M1.500.500h2M6.500 1v4.500" fill="none" stroke="#111" /></svg>
            <svg className="ml-[25px]" width="8" height="8" viewBox="0 0 8 8"><path d="M.7.7l6.600 6.600M7.300.7L.7 7.300" stroke="#111" strokeWidth="1" /></svg>
          </div>
        </div>
        <div className="flex h-[14px] shrink-0 items-center gap-[10.400px] bg-[#eeeeee] pl-[7.300px] pt-px">
          {MENU.map(([t, w]) => <Label key={t} w={w}>{t}</Label>)}
        </div>
        <Bar items={BAR1} />
        <Bar items={BAR2} />

        <div className="flex h-[661px] shrink-0">
          <div className="flex w-[31px] shrink-0 flex-col bg-gradient-to-r from-[#fbfbfb] to-[#ededed]">
            <div className="mx-auto mt-[3px] h-[5px] w-[12px] shrink-0 border-y border-dotted border-[#b5b5b5]" />
            {SIDE.map(([n, c]) => (
              <div key={n} className="flex h-[17.550px] shrink-0 items-center pl-[5.500px]">
                <Icon n={n} />
                {c && <div className="ml-[5px]"><Caret /></div>}
              </div>
            ))}
          </div>

          <div className="flex w-[292px] shrink-0 flex-col border-l border-[#b5b5b5]">
            <div className="flex h-[324px] shrink-0 flex-col pr-[4px]">
              <PanelHead title="Navegador" w={42.500} />
              <div className="flex h-[23px] shrink-0 items-center gap-[6.200px] pl-[5.500px]">
                {["addSel", "sync", "funnel", "collapse", "info"].map((n) => <Icon key={n} n={n} />)}
              </div>
              <div className="flex grow flex-col border border-[#b5b5b5] bg-white">
                {TREE.map(([ic, t, w, a]) => (
                  <div key={t} className="flex h-[13.130px] shrink-0 items-center">
                    <div className="flex w-[16.500px] shrink-0 justify-center pr-[2px]">
                      {a && <svg width="3" height="5" viewBox="0 0 3 5"><path d="M0 0v5l3-2.500z" fill="#6a6a6a" /></svg>}
                    </div>
                    <Icon n={ic} />
                    <Label w={w} className="ml-[4px] pt-px">{t}</Label>
                  </div>
                ))}
              </div>
            </div>
            <div className="flex grow flex-col pr-[4px] pt-[4px]">
              <PanelHead title="Capas" w={22.700} />
              <div className="flex h-[23px] shrink-0 items-center gap-[6.200px] pl-[5.500px]">
                {["brush", "group", "eye", "funnel", "expr"].map((n) => <Icon key={n} n={n} />)}
                <div className="-ml-[2px] -mr-px"><Caret /></div>
                {["expand", "collapse", "remove"].map((n) => <Icon key={n} n={n} />)}
              </div>
              <div className="flex grow flex-col border border-[#b5b5b5] bg-white pt-px">
                <LayerRow arrow icon={<Icon n="stack" s={11} />} w={28}>Marcos</LayerRow>
                <LayerRow level={1} w={127} bold>Historial de ubicaciones-marcos</LayerRow>
                <LayerRow arrow icon={<Icon n="stack" s={11} />} w={22}>Marta</LayerRow>
                <LayerRow level={1} w={33} bold icon={<svg width="5" height="5" viewBox="0 0 5 5"><circle cx="2.500" cy="2.500" r="1.500" fill="none" stroke="#5cf0e0" /></svg>}>Vértices</LayerRow>
                <LayerRow level={1} sel w={122} bold icon={<div className="h-px w-[11px] bg-[#1b97d8]" />}>Historial de ubicaciones-marta</LayerRow>
                <LayerRow w={80} bold icon={<div className="h-[12px] w-[12px] border border-[#7a2a28] bg-[#c43c39]" />}>Disuelto-municipios</LayerRow>
                <LayerRow w={43} bold icon={<div className="h-[12px] w-[12px] border border-[#a3660f] bg-[#ff9e17]" />}>municipios</LayerRow>
                <LayerRow w={33.500} bold>call2017</LayerRow>
              </div>
            </div>
          </div>

          <div className="w-[1077px] shrink-0 border-x border-b border-[#b0b0b0]"><MapCanvas /></div>
        </div>

        <div className="flex h-[22px] shrink-0 items-center border-b border-[#a39b86] pl-[3px]">
          <Field className="w-[186px] pl-[6px] text-[#7b7b7b]">
            <svg width="9" height="9" viewBox="0 0 9 9"><circle cx="4" cy="3.700" r="3" fill="none" stroke="#9a9a9a" /><path d="M6 6l2.400 2.600" stroke="#9a9a9a" /></svg>
            <Label w={104} className="ml-[4px]">Escriba para localizar (Ctrl+K)</Label>
          </Field>
          <Label w={127} className="ml-[5px]">Eliminadas 3 entradas de la leyenda.</Label>
          <div className="ml-auto flex items-center pr-[5px]">
            <Label w={42.700}>Coordenada</Label>
            <Field className="ml-[3px] w-[67px] pl-[2px]"><Label w={60}>544743,4464178</Label></Field>
            <svg className="ml-[3px]" width="11" height="11" viewBox="0 0 11 11"><path d="M1 3l7 7M3 1l6 8M1 6l4 4M9 1L3 8" stroke="#444" strokeWidth="1" /><circle cx="3" cy="3" r="2" fill="none" stroke="#333" /><circle cx="8.200" cy="7.600" r="2" fill="none" stroke="#333" /><path d="M4.500 1.500l5 3" stroke="#444" strokeWidth=".8" /></svg>
            <Label w={22} className="ml-[9px]">Escala</Label>
            <Field className="ml-[3px] w-[59px] pl-[2px]">
              <Label w={33}>1:633190</Label>
              <div className="ml-auto flex h-full w-[14px] items-center justify-center border-l border-[#c4c4c4] bg-[#f7f7f7]"><Caret /></div>
            </Field>
            <svg className="ml-[9px]" width="9" height="11" viewBox="0 0 9 11"><path d="M2 5V3.200a2.500 2.500 0 0 1 5 0V5" fill="none" stroke="#888" strokeWidth="1.200" /><rect x=".5" y="5" width="8" height="5.500" rx=".8" fill="#6a6a6a" /></svg>
            <Label w={42} className="ml-[6px]">Amplificador</Label>
            <Field className="ml-[3px] w-[64px] pl-[3px]"><Label w={20.500}>100%</Label><Spin /></Field>
            <Label w={30.600} className="ml-[6px]">Rotación</Label>
            <Field className="ml-[7px] w-[60px] pl-[3px]"><Label w={18}>0,0 °</Label><Spin /></Field>
            <div className="ml-[6px]"><Check /></div>
            <Label w={43.500} className="ml-[3px]">Representar</Label>
            <svg className="ml-[13px]" width="11" height="11" viewBox="0 0 12 12">{globe("#777777", "#b4b4b4")}</svg>
            <Label w={43.500} className="ml-[3px]">EPSG:25830</Label>
            <svg className="ml-[14px]" width="12" height="11" viewBox="0 0 12 11"><path d="M6 .5q5.500 0 5.500 4Q11.500 7 9 8v2.500L6.500 8.400Q.5 8.500.5 4.500t5.500-4z" fill="#666" /><path d="M3 4.500h1.200M5.400 4.500h1.200M7.800 4.500H9" stroke="#eee" strokeWidth="1.200" /></svg>
          </div>
        </div>
      </div>
    </div>
  );
}
